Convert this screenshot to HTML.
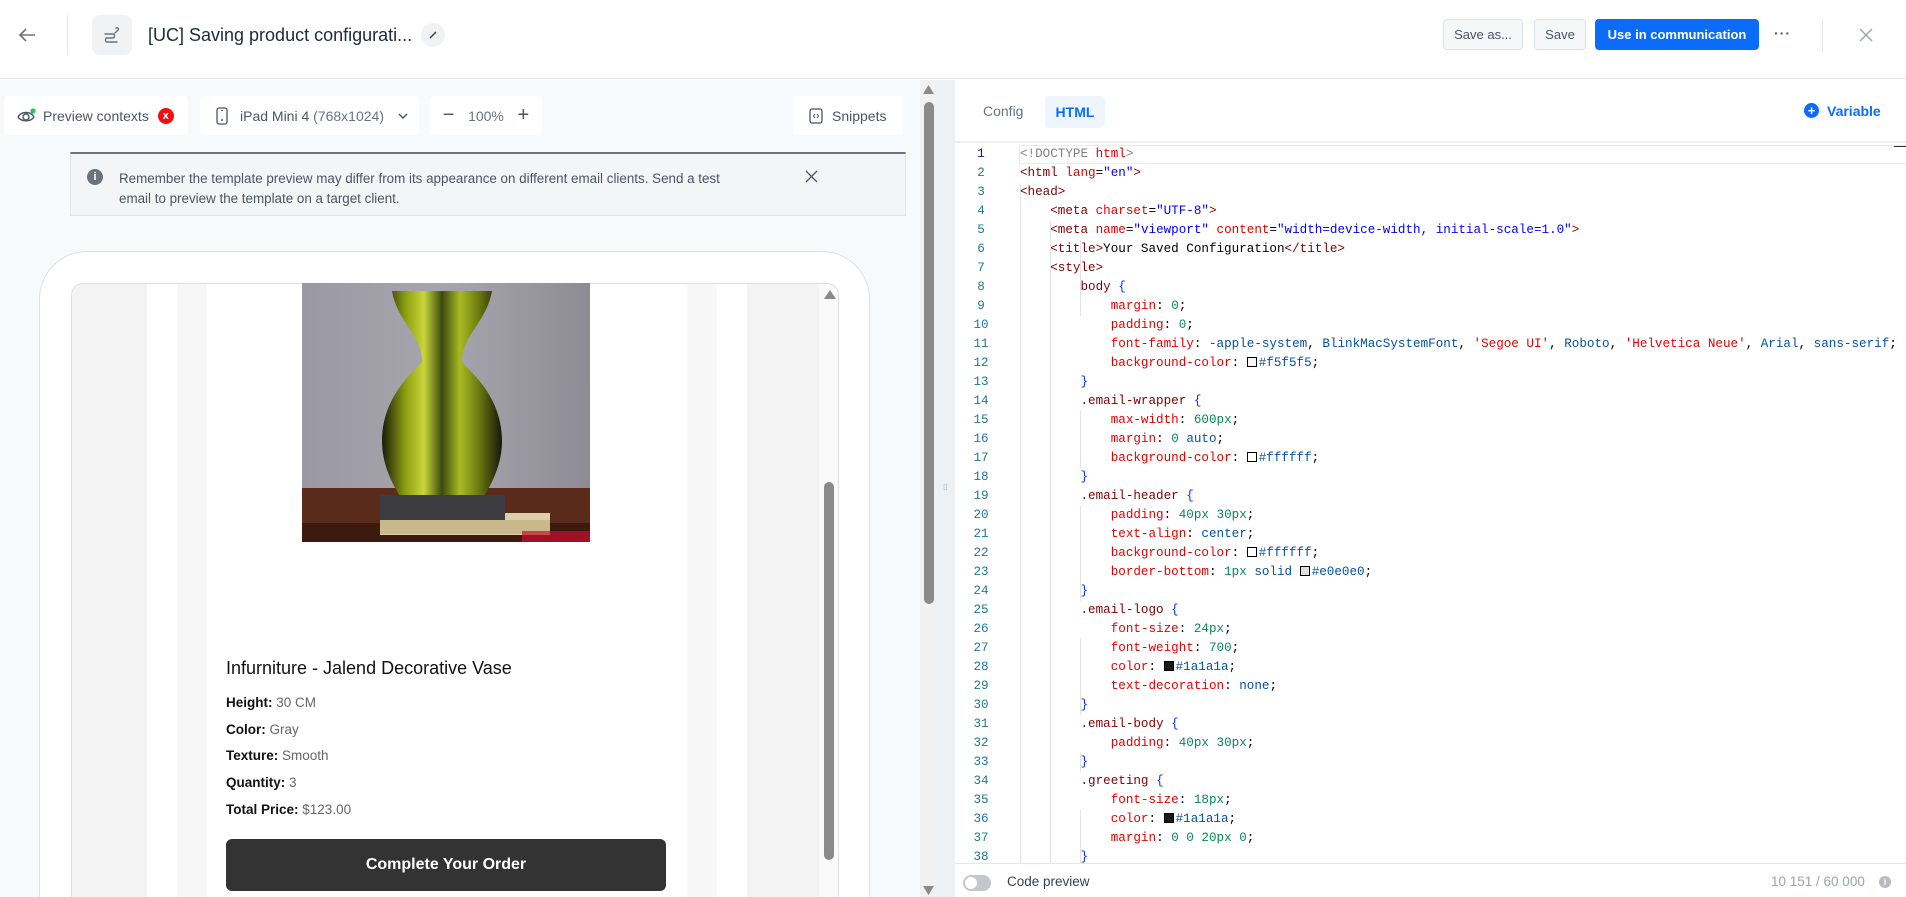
<!DOCTYPE html>
<html><head><meta charset="utf-8"><style>
*{box-sizing:border-box;margin:0;padding:0}
html,body{width:1906px;height:897px;overflow:hidden}
body{background:#fff;font-family:"Liberation Sans",sans-serif;position:relative;color:#1f2937}
#root{position:absolute;left:0;top:0;width:1906px;height:897px;overflow:hidden}
.abs{position:absolute}
.btn{position:absolute;top:19px;height:31px;border:1px solid #dde1e6;border-radius:4px;background:#f6f7f9;color:#4b5563;font-size:13px;display:flex;align-items:center;justify-content:center}
.tb{position:absolute;top:96px;height:39px;background:#fff;border-radius:4px;display:flex;align-items:center;font-size:14px;color:#4b5563}
.code{position:absolute;left:957px;top:145px;width:949px;height:718px;overflow:hidden;font-family:"Liberation Mono",monospace;font-size:12.6px}
.ln{position:absolute;left:0;width:949px;height:19px;line-height:19px;white-space:pre}
.num{position:absolute;left:0;width:48px;text-align:center;color:#237893}
.tx{position:absolute;left:63px;color:#000}
.t{color:#800000}.a{color:#e50000}.s{color:#0000ff}.p{color:#e50000}.n{color:#098658}.v{color:#0451a5}.b{color:#0431fa}.g{color:#808080}
.sw{display:inline-block;width:10px;height:10px;border:1px solid #000;vertical-align:-1px;margin-right:2px}
.guide{position:absolute;width:1px;background:#e3e3e3}
.prop{position:absolute;left:226px;font-size:13.5px;color:#666}
.prop b{color:#111}
</style></head><body><div id="root">
<div class="abs" style="left:0;top:0;width:1906px;height:79px;background:#fff;border-bottom:1px solid #e8eaed"></div>
<svg class="abs" style="left:17px;top:26px" width="20" height="18" viewBox="0 0 20 18"><path d="M18 9H3M9 3L3 9l6 6" fill="none" stroke="#6b7280" stroke-width="1.6"/></svg>
<div class="abs" style="left:67px;top:15px;width:1px;height:40px;background:#e5e7eb"></div>
<div class="abs" style="left:92px;top:15px;width:40px;height:40px;border-radius:8px;background:#f1f2f4"></div>
<svg class="abs" style="left:102px;top:25px" width="20" height="20" viewBox="0 0 20 20"><path d="M14 3c2-1 3 1 2 2l-3 3M3 9h8c2 0 2 4 0 4H5c-2 0-2 4 0 4h10" fill="none" stroke="#6b7280" stroke-width="1.4" stroke-linecap="round"/></svg>
<div class="abs" style="left:148px;top:25px;font-size:18px;color:#1f2937">[UC] Saving product configurati...</div>
<div class="abs" style="left:421px;top:23px;width:24px;height:24px;border-radius:50%;background:#f1f2f4"></div>
<svg class="abs" style="left:427px;top:29px" width="12" height="12"><path d="M3 9l6-6" stroke="#374151" stroke-width="1.5"/></svg>
<div class="btn" style="left:1443px;width:80px">Save as...</div>
<div class="btn" style="left:1534px;width:52px">Save</div>
<div class="btn" style="left:1595px;width:164px;background:#0b6cfb;border-color:#0b6cfb;color:#fff;font-weight:bold">Use in communication</div>
<div class="abs" style="left:1774px;top:25px;font-size:14px;color:#4b5563;font-weight:bold;letter-spacing:1px">···</div>
<div class="abs" style="left:1822px;top:18px;width:1px;height:34px;background:#e5e7eb"></div>
<svg class="abs" style="left:1859px;top:28px" width="14" height="14"><path d="M1 1l12 12M13 1L1 13" stroke="#9ca3af" stroke-width="1.4"/></svg>

<div class="abs" style="left:0;top:80px;width:940px;height:817px;background:#f8f9fa"></div>
<div class="tb" style="left:4px;width:184px">
<svg style="margin-left:13px" width="20" height="16" viewBox="0 0 20 16"><path d="M1 9c3-6 13-6 16 0M1 9c3 5 13 5 16 0" fill="none" stroke="#4b5563" stroke-width="1.4"/><circle cx="9" cy="9" r="3" fill="none" stroke="#4b5563" stroke-width="1.4"/><circle cx="16" cy="3" r="2.6" fill="#22c55e"/></svg>
<span style="margin-left:6px">Preview contexts</span>
<span style="margin-left:9px;width:16px;height:16px;border-radius:50%;background:#ef1111;color:#fff;font-size:11px;font-weight:bold;display:flex;align-items:center;justify-content:center">x</span></div>
<div class="tb" style="left:200px;width:219px">
<svg style="margin-left:16px" width="12" height="18"><rect x="1" y="1" width="10" height="16" rx="2" fill="none" stroke="#4b5563" stroke-width="1.3"/><circle cx="6" cy="13" r="1" fill="#4b5563"/><rect x="5" y="3" width="2" height="1" fill="#4b5563"/></svg>
<span style="margin-left:12px">iPad Mini 4 <span style="color:#6b7280">(768x1024)</span></span>
<svg style="margin-left:14px" width="10" height="8"><path d="M1 2l4 4 4-4" fill="none" stroke="#4b5563" stroke-width="1.4"/></svg></div>
<div class="tb" style="left:430px;width:112px;justify-content:space-around;padding:0 6px"><span style="font-size:20px;color:#4b5563">−</span><span style="color:#6b7280">100%</span><span style="font-size:20px;color:#4b5563">+</span></div>
<div class="tb" style="left:793px;width:110px">
<svg style="margin-left:16px" width="14" height="16"><rect x="1" y="1" width="12" height="14" rx="2" fill="none" stroke="#4b5563" stroke-width="1.3"/><path d="M6 6L4.5 8 6 10M8 6l1.5 2L8 10" fill="none" stroke="#4b5563" stroke-width="1"/></svg><span style="margin-left:9px">Snippets</span></div>
<div class="abs" style="left:70px;top:152px;width:836px;height:64px;background:#f4f5f7;border:1px solid #e3e5e8;border-top:2px solid #6b7280"></div>
<div class="abs" style="left:87px;top:169px;width:16px;height:16px;border-radius:50%;background:#6b7280;color:#fff;font-size:11px;font-weight:bold;text-align:center;line-height:16px">i</div>
<div class="abs" style="left:119px;top:169px;width:622px;font-size:13.4px;line-height:20px;color:#4b5563">Remember the template preview may differ from its appearance on different email clients. Send a test email to preview the template on a target client.</div>
<svg class="abs" style="left:805px;top:170px" width="13" height="13"><path d="M1 1l11 11M12 1L1 12" stroke="#4b5563" stroke-width="1.3"/></svg>
<div class="abs" style="left:39px;top:251px;width:831px;height:646px;border:1px solid #dde0e4;border-bottom:none;border-radius:48px 48px 0 0;background:#fff"></div>
<div class="abs" style="left:71px;top:283px;width:768px;height:614px;border:1px solid #dcdfe3;border-bottom:none;border-radius:12px 12px 0 0;overflow:hidden;background:#f3f3f3">
 <div class="abs" style="left:75px;top:0;width:30px;height:614px;background:#fff"></div>
 <div class="abs" style="left:105px;top:0;width:30px;height:614px;background:#f7f7f7"></div>
 <div class="abs" style="left:135px;top:0;width:480px;height:614px;background:#fff"></div>
 <div class="abs" style="left:615px;top:0;width:30px;height:614px;background:#f7f7f7"></div>
 <div class="abs" style="left:645px;top:0;width:30px;height:614px;background:#fff"></div>
 <div class="abs" style="left:747px;top:0;width:21px;height:614px;background:#fafafa"></div>
 <div class="abs" style="left:752px;top:198px;width:10px;height:378px;border-radius:5px;background:#8a8a8a"></div>
 <svg class="abs" style="left:752px;top:6px" width="12" height="9"><path d="M6 0L12 9H0z" fill="#8a8a8a"/></svg>
</div>
<svg class="abs" style="left:302px;top:283px" width="288" height="259" viewBox="0 0 288 259">
<defs><linearGradient id="bg" x1="0" x2="1"><stop offset="0" stop-color="#9a99a3"/><stop offset=".5" stop-color="#a7a6ae"/><stop offset="1" stop-color="#8d8c95"/></linearGradient>
<linearGradient id="vs" x1="0" x2="1"><stop offset="0" stop-color="#1a1d0a"/><stop offset=".2" stop-color="#8fa012"/><stop offset=".35" stop-color="#c9d63a"/><stop offset=".5" stop-color="#3b4a10"/><stop offset=".65" stop-color="#a8bb22"/><stop offset=".8" stop-color="#6e7d10"/><stop offset="1" stop-color="#15170a"/></linearGradient></defs>
<rect width="288" height="259" fill="url(#bg)"/>
<rect y="205" width="288" height="54" fill="#5a2a1a"/>
<rect y="240" width="288" height="19" fill="#3d1a10"/>
<path d="M90 8h100c-5 30-30 45-30 70 0 5 40 30 40 80 0 40-30 70-40 90h-40c-10-20-40-50-40-90 0-50 40-75 40-80 0-25-25-40-30-70z" fill="url(#vs)"/>
<rect x="78" y="230" width="170" height="22" fill="#d9cfa8"/>
<rect x="78" y="212" width="125" height="25" fill="#3c3c40"/>
<rect x="78" y="237" width="170" height="14" fill="#c8b88a"/>
<rect x="220" y="248" width="68" height="11" fill="#c8102e" opacity=".7"/>
</svg>
<div class="abs" style="left:226px;top:658px;font-size:18px;color:#111">Infurniture - Jalend Decorative Vase</div>
<div class="prop" style="top:695px"><b>Height:</b> 30 CM</div>
<div class="prop" style="top:722px"><b>Color:</b> Gray</div>
<div class="prop" style="top:748px"><b>Texture:</b> Smooth</div>
<div class="prop" style="top:775px"><b>Quantity:</b> 3</div>
<div class="prop" style="top:802px"><b>Total Price:</b> $123.00</div>
<div class="abs" style="left:226px;top:839px;width:440px;height:52px;border-radius:6px;background:#333;color:#fff;font-size:16px;font-weight:bold;text-align:center;line-height:52px">Complete Your Order</div>
<div class="abs" style="left:920px;top:80px;width:17px;height:817px;background:#f1f1f1"></div>
<svg class="abs" style="left:923px;top:85px" width="11" height="9"><path d="M5.5 0L11 9H0z" fill="#8a8a8a"/></svg>
<div class="abs" style="left:924px;top:102px;width:10px;height:502px;border-radius:5px;background:#8a8a8a"></div>
<svg class="abs" style="left:923px;top:886px" width="11" height="9"><path d="M0 0h11L5.5 9z" fill="#8a8a8a"/></svg>
<div class="abs" style="left:937px;top:80px;width:18px;height:817px;background:#eef0f2"></div>
<div class="abs" style="left:943px;top:486px;font-size:8px;color:#9ca3af;line-height:4px">⁞⁞</div>

<div class="abs" style="left:955px;top:80px;width:951px;height:63px;background:#fff;border-bottom:2px solid #eceef0"></div>
<div class="abs" style="left:983px;top:103px;font-size:14px;color:#6b7280">Config</div>
<div class="abs" style="left:1045px;top:96px;width:60px;height:32px;border-radius:4px;background:#eef5ff;color:#0b6cfb;font-weight:bold;font-size:14px;text-align:center;line-height:32px">HTML</div>
<div class="abs" style="left:1804px;top:103px;width:15px;height:15px;border-radius:50%;background:#0b6cfb;color:#fff;font-size:13px;font-weight:bold;text-align:center;line-height:15px">+</div>
<div class="abs" style="left:1827px;top:103px;font-size:14px;color:#0b6cfb;font-weight:bold">Variable</div>
<div class="abs" style="left:1894px;top:145px;width:12px;height:2px;background:#333"></div>

<div class="code">
<div class="guide" style="left:63px;top:38px;height:680px"></div>
<div class="guide" style="left:93px;top:76px;height:642px"></div>
<div class="guide" style="left:123px;top:95px;height:76px"></div>
<div class="guide" style="left:123px;top:266px;height:57px"></div>
<div class="guide" style="left:123px;top:361px;height:95px"></div>
<div class="guide" style="left:123px;top:494px;height:76px"></div>
<div class="guide" style="left:123px;top:608px;height:19px"></div>
<div class="guide" style="left:123px;top:665px;height:53px"></div>
<div class="abs" style="left:62px;top:0;width:900px;height:19px;border:1px solid #eaeaea;border-right:none"></div>
<div class="ln" style="top:0"><span class="num" style="color:#0b216f">1</span><span class="tx"><span class="g">&lt;!DOCTYPE</span> <span class="a">html</span><span class="g">&gt;</span></span></div>
<div class="ln" style="top:19px"><span class="num">2</span><span class="tx"><span class="t">&lt;html</span> <span class="a">lang</span>=<span class="s">"en"</span><span class="t">&gt;</span></span></div>
<div class="ln" style="top:38px"><span class="num">3</span><span class="tx"><span class="t">&lt;head&gt;</span></span></div>
<div class="ln" style="top:57px"><span class="num">4</span><span class="tx">    <span class="t">&lt;meta</span> <span class="a">charset</span>=<span class="s">"UTF-8"</span><span class="t">&gt;</span></span></div>
<div class="ln" style="top:76px"><span class="num">5</span><span class="tx">    <span class="t">&lt;meta</span> <span class="a">name</span>=<span class="s">"viewport"</span> <span class="a">content</span>=<span class="s">"width=device-width, initial-scale=1.0"</span><span class="t">&gt;</span></span></div>
<div class="ln" style="top:95px"><span class="num">6</span><span class="tx">    <span class="t">&lt;title&gt;</span>Your Saved Configuration<span class="t">&lt;/title&gt;</span></span></div>
<div class="ln" style="top:114px"><span class="num">7</span><span class="tx">    <span class="t">&lt;style&gt;</span></span></div>
<div class="ln" style="top:133px"><span class="num">8</span><span class="tx">        <span class="t">body</span> <span class="b">{</span></span></div>
<div class="ln" style="top:152px"><span class="num">9</span><span class="tx">            <span class="p">margin</span>: <span class="n">0</span>;</span></div>
<div class="ln" style="top:171px"><span class="num">10</span><span class="tx">            <span class="p">padding</span>: <span class="n">0</span>;</span></div>
<div class="ln" style="top:190px"><span class="num">11</span><span class="tx">            <span class="p">font-family</span>: <span class="v">-apple-system</span>, <span class="v">BlinkMacSystemFont</span>, <span class="a">'Segoe UI'</span>, <span class="v">Roboto</span>, <span class="a">'Helvetica Neue'</span>, <span class="v">Arial</span>, <span class="v">sans-serif</span>;</span></div>
<div class="ln" style="top:209px"><span class="num">12</span><span class="tx">            <span class="p">background-color</span>: <span class="sw" style="background:#f5f5f5"></span><span class="v">#f5f5f5</span>;</span></div>
<div class="ln" style="top:228px"><span class="num">13</span><span class="tx">        <span class="b">}</span></span></div>
<div class="ln" style="top:247px"><span class="num">14</span><span class="tx">        <span class="t">.email-wrapper</span> <span class="b">{</span></span></div>
<div class="ln" style="top:266px"><span class="num">15</span><span class="tx">            <span class="p">max-width</span>: <span class="n">600px</span>;</span></div>
<div class="ln" style="top:285px"><span class="num">16</span><span class="tx">            <span class="p">margin</span>: <span class="n">0</span> <span class="v">auto</span>;</span></div>
<div class="ln" style="top:304px"><span class="num">17</span><span class="tx">            <span class="p">background-color</span>: <span class="sw" style="background:#fff"></span><span class="v">#ffffff</span>;</span></div>
<div class="ln" style="top:323px"><span class="num">18</span><span class="tx">        <span class="b">}</span></span></div>
<div class="ln" style="top:342px"><span class="num">19</span><span class="tx">        <span class="t">.email-header</span> <span class="b">{</span></span></div>
<div class="ln" style="top:361px"><span class="num">20</span><span class="tx">            <span class="p">padding</span>: <span class="n">40px 30px</span>;</span></div>
<div class="ln" style="top:380px"><span class="num">21</span><span class="tx">            <span class="p">text-align</span>: <span class="v">center</span>;</span></div>
<div class="ln" style="top:399px"><span class="num">22</span><span class="tx">            <span class="p">background-color</span>: <span class="sw" style="background:#fff"></span><span class="v">#ffffff</span>;</span></div>
<div class="ln" style="top:418px"><span class="num">23</span><span class="tx">            <span class="p">border-bottom</span>: <span class="n">1px</span> <span class="v">solid</span> <span class="sw" style="background:#e0e0e0"></span><span class="v">#e0e0e0</span>;</span></div>
<div class="ln" style="top:437px"><span class="num">24</span><span class="tx">        <span class="b">}</span></span></div>
<div class="ln" style="top:456px"><span class="num">25</span><span class="tx">        <span class="t">.email-logo</span> <span class="b">{</span></span></div>
<div class="ln" style="top:475px"><span class="num">26</span><span class="tx">            <span class="p">font-size</span>: <span class="n">24px</span>;</span></div>
<div class="ln" style="top:494px"><span class="num">27</span><span class="tx">            <span class="p">font-weight</span>: <span class="n">700</span>;</span></div>
<div class="ln" style="top:513px"><span class="num">28</span><span class="tx">            <span class="p">color</span>: <span class="sw" style="background:#1a1a1a"></span><span class="v">#1a1a1a</span>;</span></div>
<div class="ln" style="top:532px"><span class="num">29</span><span class="tx">            <span class="p">text-decoration</span>: <span class="v">none</span>;</span></div>
<div class="ln" style="top:551px"><span class="num">30</span><span class="tx">        <span class="b">}</span></span></div>
<div class="ln" style="top:570px"><span class="num">31</span><span class="tx">        <span class="t">.email-body</span> <span class="b">{</span></span></div>
<div class="ln" style="top:589px"><span class="num">32</span><span class="tx">            <span class="p">padding</span>: <span class="n">40px 30px</span>;</span></div>
<div class="ln" style="top:608px"><span class="num">33</span><span class="tx">        <span class="b">}</span></span></div>
<div class="ln" style="top:627px"><span class="num">34</span><span class="tx">        <span class="t">.greeting</span> <span class="b">{</span></span></div>
<div class="ln" style="top:646px"><span class="num">35</span><span class="tx">            <span class="p">font-size</span>: <span class="n">18px</span>;</span></div>
<div class="ln" style="top:665px"><span class="num">36</span><span class="tx">            <span class="p">color</span>: <span class="sw" style="background:#1a1a1a"></span><span class="v">#1a1a1a</span>;</span></div>
<div class="ln" style="top:684px"><span class="num">37</span><span class="tx">            <span class="p">margin</span>: <span class="n">0 0 20px 0</span>;</span></div>
<div class="ln" style="top:703px"><span class="num">38</span><span class="tx">        <span class="b">}</span></span></div>
</div>
<div class="abs" style="left:955px;top:863px;width:951px;height:34px;background:#fff;border-top:1px solid #e5e7eb"></div>
<div class="abs" style="left:963px;top:875px;width:28px;height:16px;border-radius:8px;background:#c4c8cd"></div>
<div class="abs" style="left:965px;top:877px;width:12px;height:12px;border-radius:50%;background:#fff"></div>
<div class="abs" style="left:1007px;top:874px;font-size:13.5px;color:#374151">Code preview</div>
<div class="abs" style="left:1771px;top:874px;font-size:13.5px;color:#9ca3af">10 151 / 60 000</div>
<div class="abs" style="left:1879px;top:876px;width:12px;height:12px;border-radius:50%;background:#b8bcc2;color:#fff;font-size:9px;text-align:center;line-height:12px;font-weight:bold">i</div>
</div></body></html>
